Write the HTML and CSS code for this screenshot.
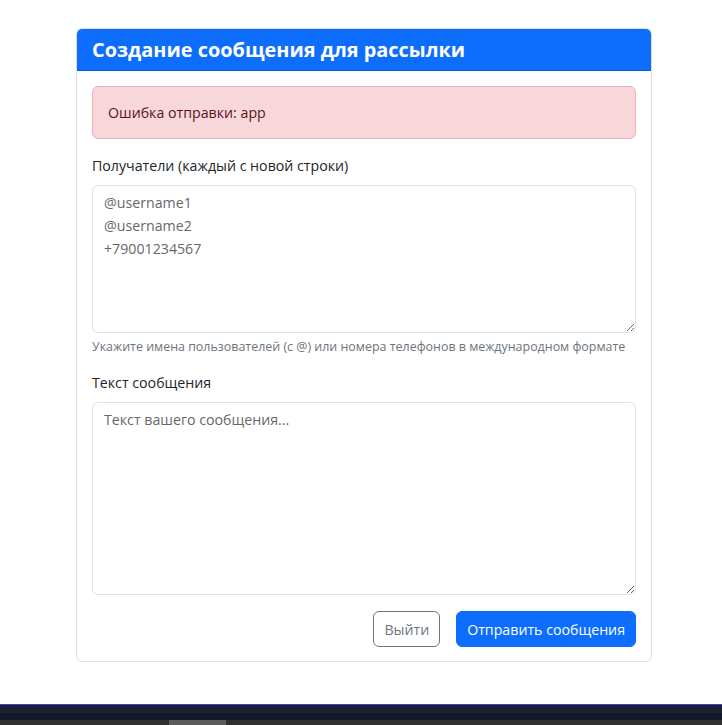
FILE: index.html
```html
<!DOCTYPE html>
<html lang="ru">
<head>
<meta charset="utf-8">
<link rel="stylesheet" href="styles.css">
</head>
<body>
<main class="page">
  <section class="card">
    <header class="card-header">
      <h1 class="card-title">Создание сообщения для рассылки</h1>
    </header>
    <div class="card-body">
      <div class="alert">Ошибка отправки: app</div>
      <form class="form">
        <div class="field">
          <label class="label" for="rcp">Получатели (каждый с новой строки)</label>
          <textarea id="rcp" class="control control-rcp" placeholder="@username1&#10;@username2&#10;+79001234567"></textarea>
          <div class="help">Укажите имена пользователей (с @) или номера телефонов в международном формате</div>
        </div>
        <div class="field">
          <label class="label" for="msg">Текст сообщения</label>
          <textarea id="msg" class="control control-msg" placeholder="Текст вашего сообщения..."></textarea>
        </div>
        <div class="actions">
          <button type="button" class="btn btn-outline">Выйти</button>
          <button type="button" class="btn btn-primary">Отправить сообщения</button>
        </div>
      </form>
    </div>
  </section>
</main>
<footer class="taskbar">
  <div class="taskbar-top"></div>
  <div class="taskbar-mid"></div>
  <div class="scrolltrack"><div class="scrollthumb"></div></div>
</footer>
</body>
</html>
```

FILE: styles.css
```css
* { box-sizing: border-box; }
html, body { margin: 0; padding: 0; }
body {
  height: 725px;
  display: flex;
  flex-direction: column;
  background: #fff;
  font-family: "Open Sans", "Noto Sans", sans-serif;
  font-size: 14.2px;
  line-height: 23px;
  color: #212529;
  overflow: hidden;
}
.page {
  flex: 1;
  padding: 28px 0 0 76px;
}
.card {
  width: 576px;
  border: 1px solid #dcdfe3;
  border-radius: 6px;
  overflow: hidden;
}
.card-header {
  background: #0d6efd;
  height: 42px;
  padding: 0 15px;
  display: flex;
  align-items: center;
  border-bottom: 1px solid #0b5ed7;
}
.card-title {
  margin: 0;
  color: #fff;
  font-size: 19.9px;
  font-weight: 700;
  line-height: 26px;
}
.card-body {
  padding: 15px 15px 14px;
}
.alert {
  background: #f8d7da;
  border: 1px solid #f1aeb5;
  color: #58151c;
  border-radius: 6px;
  padding: 14px 15px;
  margin-bottom: 15px;
}
.form { display: flex; flex-direction: column; }
.field { display: flex; flex-direction: column; margin-bottom: 15px; }
.field:nth-child(2) { margin-bottom: 16px; }
.label { margin-bottom: 8px; }
.control {
  display: block;
  width: 100%;
  border: 1px solid #dee2e6;
  border-radius: 6px;
  padding: 5px 11px;
  font-family: inherit;
  font-size: 14.2px;
  line-height: 23px;
  color: #212529;
  resize: vertical;
  outline: none;
}
.control::placeholder { color: #64686c; opacity: 1; }
.control-rcp { height: 148px; }
.control-msg { height: 193px; }
.help {
  margin-top: 4px;
  font-size: 12.45px;
  line-height: 19px;
  color: #6c757d;
}
.actions {
  display: flex;
  justify-content: flex-end;
  gap: 16px;
}
.btn {
  height: 36px;
  padding: 0 10px;
  border-radius: 6px;
  font-family: inherit;
  font-size: 14.2px;
  line-height: 23px;
  border: 1px solid transparent;
}
.btn-outline {
  background: #fff;
  border-color: #6c757d;
  color: #6c757d;
}
.btn-primary {
  background: #0d6efd;
  border-color: #0d6efd;
  color: #fff;
}
.taskbar { height: 21px; display: flex; flex-direction: column; }
.taskbar-top { height: 1px; background: #4a3cc8; }
.taskbar-mid {
  height: 15px;
  background: linear-gradient(#1c2233 0 8px, #141a28 8px 100%);
}
.scrolltrack {
  height: 5px;
  background: #2f2f2f;
  padding-left: 169px;
}
.scrollthumb { width: 57px; height: 5px; background: #5c5c5c; }
```
